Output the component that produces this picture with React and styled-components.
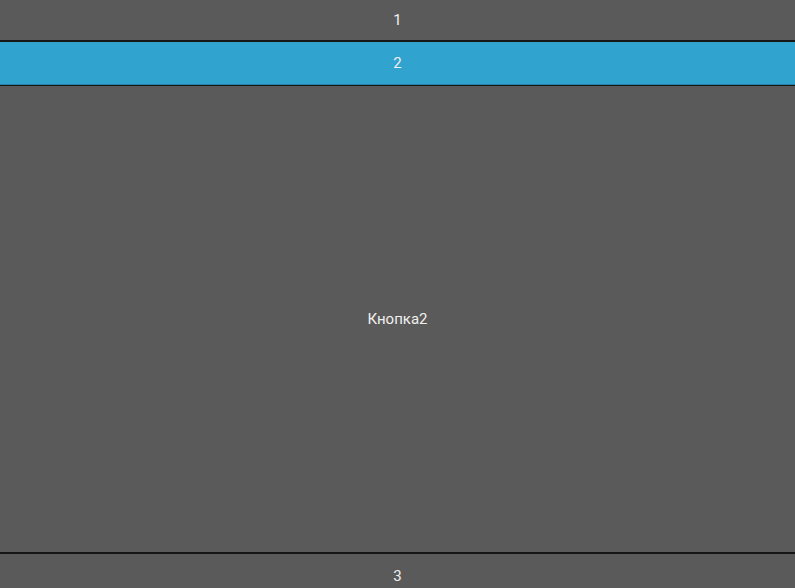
import React from "react"
import styled, { createGlobalStyle } from "styled-components"

const Global = createGlobalStyle`
    html, body, #root {
        margin: 0;
        padding: 0;
    }
    html, body {
        height: 100%;
        overflow: hidden;
    }
    body {
        background: #5a5a5a;
        font-family: Roboto, "Noto Sans", sans-serif;
    }
`

// Vertical accordion: header rows and the open panel
const Accordion = styled.div`
    display: flex;
    flex-direction: column;
    background: #5a5a5a;
    color: #f0f0f0;
    font-size: 15px;
`

const Header = styled.div`
    display: flex;
    align-items: center;
    justify-content: center;
    height: ${p => p.h}px;
    flex-shrink: 0;
    background: ${p => (p.active ? "#31a3cf" : "#5a5a5a")};
    border-bottom: ${p => (p.active ? "1px solid #2582a8" : "none")};
    box-sizing: border-box;
`

const Divider = styled.div`
    height: ${p => p.h}px;
    background: #161616;
    flex-shrink: 0;
`

const Panel = styled.div`
    height: 466px;
    display: flex;
    align-items: center;
    justify-content: center;
`

const App = () => {
    return (
        <>
            <Global />
            <Accordion>
                <Header h={40}>1</Header>
                <Divider h={2} />
                <Header h={43} active>2</Header>
                <Divider h={1} />
                <Panel>Кнопка2</Panel>
                <Divider h={2} />
                <Header h={44}>3</Header>
            </Accordion>
        </>
    )
}

export default App
